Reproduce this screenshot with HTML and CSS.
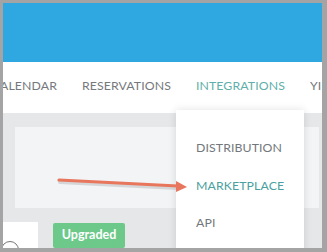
FILE: index.html
```html
<!DOCTYPE html>
<html>
<head>
<meta charset="utf-8">
<link rel="stylesheet" href="styles.css">
</head>
<body>
<div class="frame">
  <div class="screen">
    <div class="header"></div>
    <nav class="nav">
      <span class="nav-item first">ALENDAR</span>
      <span class="nav-item">RESERVATIONS</span>
      <span class="nav-item active">INTEGRATIONS</span>
      <span class="nav-item">YI</span>
    </nav>
    <div class="content">
      <div class="panel"></div>
      <div class="row">
        <div class="card"><span class="circle"></span></div>
        <span class="badge">Upgraded</span>
      </div>
    </div>
    <div class="dropdown">
      <div class="dd-item">DISTRIBUTION</div>
      <div class="dd-item active">MARKETPLACE</div>
      <div class="dd-item">API</div>
    </div>
    <svg class="arrow" width="140" height="20" viewBox="0 0 140 20">
      <line x1="2" y1="4" x2="120" y2="10" stroke="#b8b8b8" stroke-opacity="0.5" stroke-width="4" stroke-linecap="round" transform="translate(1,2)"/>
      <line x1="2" y1="4" x2="121" y2="10" stroke="#e8765c" stroke-width="3.2" stroke-linecap="round"/>
      <polygon points="119,5 130,11 119,16" fill="#e8765c"/>
    </svg>
  </div>
</div>
</body>
</html>
```

FILE: styles.css
```css
html, body {
  margin: 0;
  padding: 0;
}
body {
  background: #a4a4a4;
  width: 327px;
  height: 252px;
  overflow: hidden;
  font-family: Lato, "Open Sans", sans-serif;
}
.frame {
  padding: 3px 5px 4px 3px;
}
.screen {
  position: relative;
  width: 319px;
  height: 245px;
  overflow: hidden;
  background: #e5e7e9;
  display: flex;
  flex-direction: column;
}
.header {
  height: 59px;
  background: #2fa8e1;
  flex: none;
}
.nav {
  height: 51px;
  background: #ffffff;
  display: flex;
  align-items: center;
  white-space: nowrap;
  flex: none;
  padding-bottom: 4px;
  box-sizing: border-box;
}
.nav-item {
  font-size: 12.3px;
  color: #75797d;
  margin-right: 25px;
  letter-spacing: 0.1px;
}
.nav-item.first {
  margin-left: -3px;
}
.nav-item.active {
  color: #5fb0aa;
}
.content {
  flex: 1;
  display: flex;
  flex-direction: column;
}
.panel {
  margin: 14px 3px 0 12px;
  height: 81px;
  background: #f2f4f6;
}
.row {
  margin-top: 14px;
  display: flex;
  align-items: flex-start;
  gap: 15px;
}
.card {
  position: relative;
  width: 35px;
  height: 27px;
  background: #ffffff;
  overflow: hidden;
}
.circle {
  position: absolute;
  left: -2px;
  top: 19px;
  width: 16px;
  height: 16px;
  border: 1px solid #777;
  border-radius: 50%;
}
.badge {
  margin-top: 1px;
  width: 72px;
  height: 25px;
  background: #6cc98a;
  color: #ffffff;
  font-weight: bold;
  font-size: 12.5px;
  display: flex;
  justify-content: center;
  padding-top: 4px;
  box-sizing: border-box;
  border-radius: 2px;
}
.dropdown {
  position: absolute;
  left: 173px;
  top: 107px;
  width: 128px;
  height: 150px;
  background: #ffffff;
  box-shadow: 0 0 8px rgba(0, 0, 0, 0.12);
  padding-top: 30px;
  box-sizing: border-box;
}
.dd-item {
  font-size: 12.3px;
  color: #72777c;
  padding-left: 20px;
  height: 37.5px;
  letter-spacing: 0.1px;
}
.dd-item.active {
  color: #4a9fa0;
}
.arrow {
  position: absolute;
  left: 54px;
  top: 173px;
}
```
